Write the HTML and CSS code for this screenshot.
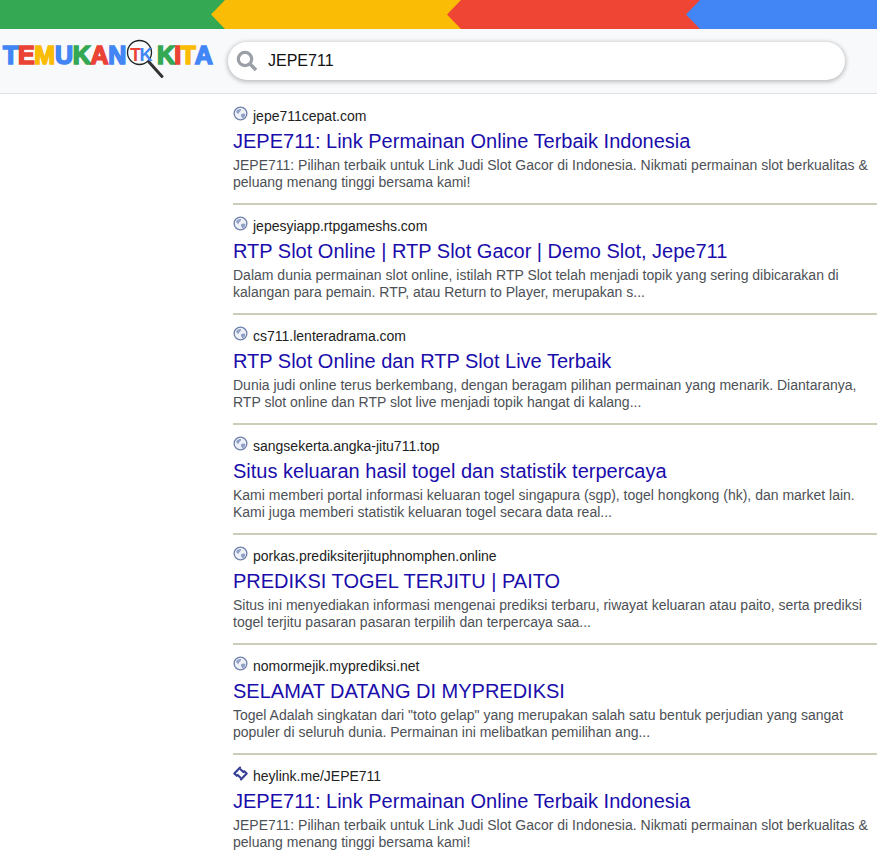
FILE: index.html
```html
<!DOCTYPE html>
<html lang="id">
<head>
<meta charset="utf-8">
<title>JEPE711 - TemukanKita</title>
<link rel="stylesheet" href="styles.css">
</head>
<body>
<div class="ribbon">
  <div class="seg seg-green"></div>
  <div class="seg seg-yellow"></div>
  <div class="seg seg-red"></div>
  <div class="seg seg-blue"></div>
</div>
<header class="header">
  <div class="logo">
    <span class="word">
      <span class="c-b">T</span><span class="c-r">E</span><span class="c-y">M</span><span class="c-b">U</span><span class="c-g">K</span><span class="c-r">A</span><span class="c-b">N</span>
    </span>
    <span class="lens">
      <svg class="lens-handle" width="42" height="46" viewBox="0 0 42 46"><line x1="23" y1="23" x2="36" y2="37.5" stroke="#333" stroke-width="3" stroke-linecap="round"/><circle cx="13.5" cy="13.5" r="12" fill="#f8f9fa" stroke="#222" stroke-width="1.3"/></svg>
      <span class="lens-text"><span class="c-r">T</span><span class="c-b">K</span></span>
    </span>
    <span class="word word-end">
      <span class="c-g">K</span><span class="c-r">I</span><span class="c-y">T</span><span class="c-b">A</span>
    </span>
  </div>
  <div class="search">
    <svg class="search-icon" width="22" height="22" viewBox="0 0 22 22"><circle cx="9" cy="9" r="6.7" fill="none" stroke="#9aa0a6" stroke-width="3.2"/><line x1="14" y1="14" x2="20" y2="20" stroke="#9aa0a6" stroke-width="3.6"/></svg>
    <span class="query">JEPE711</span>
  </div>
</header>
<main class="results">
  <article class="result">
    <div class="site"><svg class="fav"><use href="#globe"/></svg><span>jepe711cepat.com</span></div>
    <a class="title" href="#">JEPE711: Link Permainan Online Terbaik Indonesia</a>
    <p class="snippet">JEPE711: Pilihan terbaik untuk Link Judi Slot Gacor di Indonesia. Nikmati permainan slot berkualitas &amp; peluang menang tinggi bersama kami!</p>
  </article>
  <article class="result">
    <div class="site"><svg class="fav"><use href="#globe"/></svg><span>jepesyiapp.rtpgameshs.com</span></div>
    <a class="title" href="#">RTP Slot Online | RTP Slot Gacor | Demo Slot, Jepe711</a>
    <p class="snippet">Dalam dunia permainan slot online, istilah RTP Slot telah menjadi topik yang sering dibicarakan di kalangan para pemain. RTP, atau Return to Player, merupakan s...</p>
  </article>
  <article class="result">
    <div class="site"><svg class="fav"><use href="#globe"/></svg><span>cs711.lenteradrama.com</span></div>
    <a class="title" href="#">RTP Slot Online dan RTP Slot Live Terbaik</a>
    <p class="snippet">Dunia judi online terus berkembang, dengan beragam pilihan permainan yang menarik. Diantaranya, RTP slot online dan RTP slot live menjadi topik hangat di kalang...</p>
  </article>
  <article class="result">
    <div class="site"><svg class="fav"><use href="#globe"/></svg><span>sangsekerta.angka-jitu711.top</span></div>
    <a class="title" href="#">Situs keluaran hasil togel dan statistik terpercaya</a>
    <p class="snippet">Kami memberi portal informasi keluaran togel singapura (sgp), togel hongkong (hk), dan market lain. Kami juga memberi statistik keluaran togel secara data real...</p>
  </article>
  <article class="result">
    <div class="site"><svg class="fav"><use href="#globe"/></svg><span>porkas.prediksiterjituphnomphen.online</span></div>
    <a class="title" href="#">PREDIKSI TOGEL TERJITU | PAITO</a>
    <p class="snippet">Situs ini menyediakan informasi mengenai prediksi terbaru, riwayat keluaran atau paito, serta prediksi togel terjitu pasaran pasaran terpilih dan terpercaya saa...</p>
  </article>
  <article class="result">
    <div class="site"><svg class="fav"><use href="#globe"/></svg><span>nomormejik.myprediksi.net</span></div>
    <a class="title" href="#">SELAMAT DATANG DI MYPREDIKSI</a>
    <p class="snippet">Togel Adalah singkatan dari "toto gelap" yang merupakan salah satu bentuk perjudian yang sangat populer di seluruh dunia. Permainan ini melibatkan pemilihan ang...</p>
  </article>
  <article class="result">
    <div class="site"><svg class="fav" viewBox="0 0 16 16"><g fill="none" stroke="#333f96" stroke-width="2.2" stroke-linecap="round" stroke-linejoin="round"><path d="M4 10.5 L1.4 8 L7.5 1.6"/><path d="M12 5.5 L14.6 8 L8.5 14.4"/><path d="M8 3.5 L11 6.5"/><path d="M8 12.5 L5 9.5"/></g></svg><span>heylink.me/JEPE711</span></div>
    <a class="title" href="#">JEPE711: Link Permainan Online Terbaik Indonesia</a>
    <p class="snippet">JEPE711: Pilihan terbaik untuk Link Judi Slot Gacor di Indonesia. Nikmati permainan slot berkualitas &amp; peluang menang tinggi bersama kami!</p>
  </article>
</main>
<svg class="defs" width="0" height="0">
  <symbol id="globe" viewBox="0 0 16 16">
    <circle cx="8" cy="8" r="6.8" fill="#eef1f8" stroke="#6f81ad" stroke-width="1.4"/>
    <path d="M3.4 5.5 C5 3.4 7 2.8 8.5 3.2 C9 5.5 6.5 6 6.2 8 C5 8.6 3.6 7.5 3.4 5.5Z M8.5 9 C10.5 7.6 12.5 8 13.2 9 C13 11.2 11.3 12.8 9.8 13 C9.5 11.5 8 10.5 8.5 9Z" fill="#8fa0c6"/>
  </symbol>
</svg>
</body>
</html>
```
FILE: styles.css
```css
* { box-sizing: border-box; }
html, body { margin: 0; padding: 0; }
body { background: #fff; font-family: "Liberation Sans", Arial, sans-serif; height: 866px; overflow: hidden; }

.ribbon { display: flex; height: 29px; }
.seg { position: relative; height: 29px; }
.seg-green { width: 225px; background: #34a853; }
.seg-yellow { width: 236px; background: #fbbc05; }
.seg-red { width: 239px; background: #ee4535; }
.seg-blue { flex: 1; background: #4285f4; }
.seg-yellow::before, .seg-red::before, .seg-blue::before {
  content: ""; position: absolute; left: -14px; top: 0; width: 14px; height: 29px;
  background: inherit; clip-path: polygon(0 50%, 100% 0, 100% 100%);
}

.header { display: flex; align-items: flex-start; height: 65px; background: #f8f9fa; border-bottom: 1px solid #dfe1e5; }
.logo { width: 228px; padding: 13px 0 0 3px; display: flex; font-weight: 700; font-size: 25px; line-height: 26px; letter-spacing: -0.3px; }
.word { display: inline-flex; }
.word-end { letter-spacing: -0.8px; }
.word span { -webkit-text-stroke: 1.6px currentColor; paint-order: stroke; }
.c-b { color: #4285f4; } .c-r { color: #ea4335; } .c-y { color: #fbbc05; } .c-g { color: #34a853; }
.lens { position: relative; width: 31px; height: 26px; }
.lens-handle { position: absolute; left: 0; top: -3px; }
.lens-text { position: absolute; left: 4px; top: 4px; font-size: 18px; line-height: 18px; letter-spacing: -1.5px; }

.search { margin-top: 13px; width: 617px; height: 38px; border-radius: 19px; background: #fff; box-shadow: 0 1px 4px 1px rgba(60,64,67,.32); display: flex; align-items: center; padding-left: 8px; }
.search-icon { flex: none; }
.query { margin-left: 10px; font-size: 16px; color: #111; }

.results { padding: 1px 0 0 233px; }
.result { height: 110px; padding-top: 12px; border-bottom: 2px solid #ccccb8; }
.result:last-child { border-bottom: 0; }
.site { display: flex; align-items: center; height: 18px; font-size: 14px; color: #222; }
.fav { width: 15px; height: 15px; margin: -6px 5px 0 0; flex: none; }
.title { display: block; margin-top: 3px; font-size: 20px; line-height: 26px; color: #1a0dab; text-decoration: none; white-space: nowrap; }
.snippet { margin: 3px 0 0; font-size: 14px; line-height: 16.5px; color: #4d5156; }
.defs { position: absolute; }
```
